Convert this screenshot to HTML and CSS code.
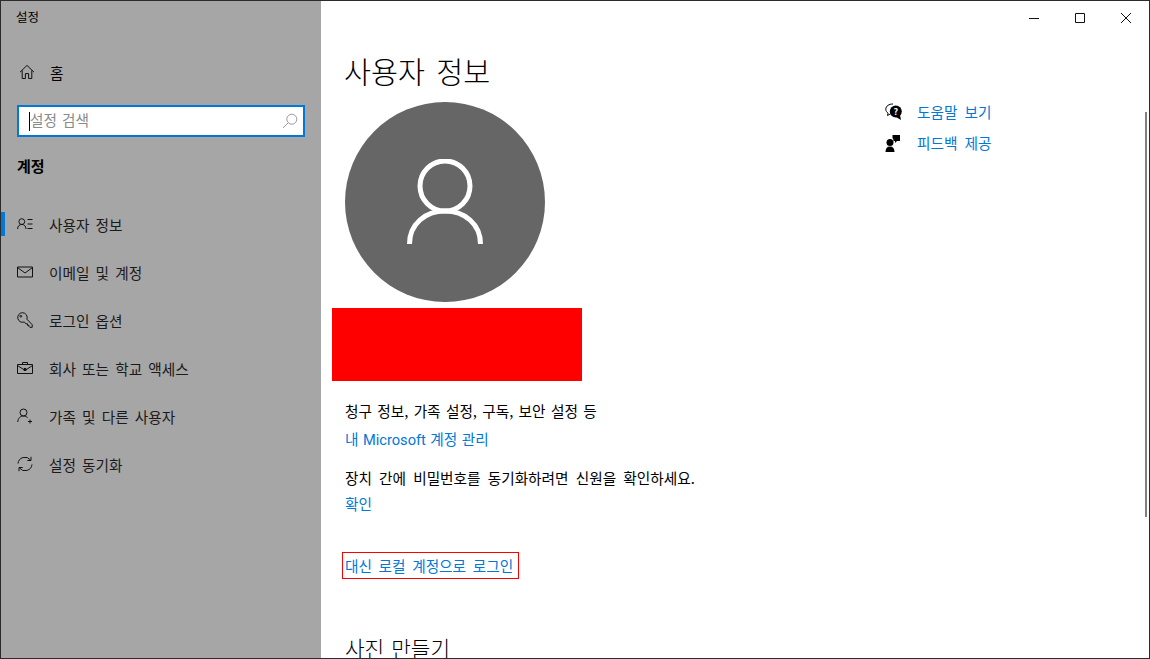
FILE: index.html
```html
<!DOCTYPE html>
<html lang="ko">

<head>
    <meta charset="UTF-8">
    <meta name="viewport" content="width=device-width, initial-scale=1.0">
    <title>설정</title>
    <link rel="stylesheet" href="styles.css">
</head>

<body>
    <div class="window">
        <!-- 왼쪽 메뉴 -->
        <div class="sidebar">
            <div class="app-title">설정</div>
            <div class="home-row">
                <svg class="nav-icon" viewBox="0 0 16 16"><path d="M1 8.200 8 1.400l7 6.800M3.200 6.400v8.100h3.200V9.600h3.200v4.900h3.200V6.400"/></svg>
                <span>홈</span>
            </div>
            <div class="search-box">
                <span class="caret"></span>
                <span class="search-text">설정 검색</span>
                <svg class="search-icon" viewBox="0 0 16 16"><circle cx="9.800" cy="6.200" r="5"/><path d="M6.200 9.800 1 15"/></svg>
            </div>
            <h3 class="group-title">계정</h3>
            <ul class="nav-list">
                <li class="nav-item active">
                    <svg class="nav-icon" viewBox="0 0 16 16"><circle cx="4.800" cy="5.600" r="2.900"/><path d="M.6 13c0-2.800 1.900-4.600 4.200-4.600S9 10.200 9 13M10.500 3.500h5M10.500 8h5M10.500 12.500h5"/></svg>
                    <span>사용자 정보</span>
                </li>
                <li class="nav-item">
                    <svg class="nav-icon" viewBox="0 0 16 16"><path d="M.5 3h15v10H.5zM.5 3.500 8 9l7.500-5.500"/></svg>
                    <span>이메일 및 계정</span>
                </li>
                <li class="nav-item">
                    <svg class="nav-icon" viewBox="0 0 16 16"><path d="M5.500.7a4.800 4.800 0 1 0 1.700 9.300l1.800 1.800h1.500v1.500h1.500v1.200l.8.800h2.400v-2.600L9.900 7.200A4.800 4.800 0 0 0 5.500.7z"/><circle cx="3.800" cy="4.300" r=".9"/></svg>
                    <span>로그인 옵션</span>
                </li>
                <li class="nav-item">
                    <svg class="nav-icon" viewBox="0 0 16 16"><path d="M.5 4.500h15v9H.5zM5.500 4.500V2.500h5v2M.5 5.500 6.500 9.500h3l6-4M7 8.500h2v2H7z"/></svg>
                    <span>회사 또는 학교 액세스</span>
                </li>
                <li class="nav-item">
                    <svg class="nav-icon" viewBox="0 0 16 16"><circle cx="6.500" cy="4.500" r="3.500"/><path d="M.8 14c0-3.500 2.400-6 5.700-6 1.700 0 3.200.7 4.200 1.800M13 11.500v4M11 13.500h4"/></svg>
                    <span>가족 및 다른 사용자</span>
                </li>
                <li class="nav-item">
                    <svg class="nav-icon" viewBox="0 0 16 16"><path d="M1 7.500A7 7 0 0 1 13.500 4M15 8.500A7 7 0 0 1 2.500 12M14 .8v3.700h-3.700M2 15.200v-3.700h3.700"/></svg>
                    <span>설정 동기화</span>
                </li>
            </ul>
        </div>

        <!-- 본문 -->
        <div class="main">
            <div class="title-bar">
                <svg class="win-btn" viewBox="0 0 46 32"><path d="M18 17.500h10"/></svg>
                <svg class="win-btn" viewBox="0 0 46 32"><path d="M18.500 12.500h9v9h-9z"/></svg>
                <svg class="win-btn" viewBox="0 0 46 32"><path d="M18 12l10 10M28 12 18 22"/></svg>
            </div>
            <div class="scrollbar"></div>
            <div class="content">
                <div class="profile">
                    <h1 class="page-title">사용자 정보</h1>
                    <div class="avatar">
                        <svg class="avatar-icon" viewBox="0 0 76 86"><circle cx="38" cy="27" r="25"/><path d="M2.500 85c0-20 16-33 35.500-33s35.500 13 35.500 33"/></svg>
                    </div>
                    <div class="name-block"></div>
                    <p class="desc first">청구 정보, 가족 설정, 구독, 보안 설정 등</p>
                    <a class="link ms-link">내 <span class="latin">Microsoft</span> 계정 관리</a>
                    <p class="desc second">장치 간에 비밀번호를 동기화하려면 신원을 확인하세요.</p>
                    <a class="link confirm-link">확인</a>
                    <div class="local-box"><a class="link">대신 로컬 계정으로 로그인</a></div>
                    <h2 class="section-title">사진 만들기</h2>
                </div>
                <div class="help">
                    <div class="help-row">
                        <svg class="help-icon" viewBox="0 0 18 18"><path class="outline" d="M8 1C4 1 .8 3 .8 6.200c0 1.800 1 3.100 2.300 3.900L2.500 12.500 5.600 10.800"/><circle cx="10.800" cy="8.500" r="6"/><path d="M11 14l5 3-1-5z"/><text x="10.800" y="11.700" class="help-q">?</text></svg>
                        <a class="link">도움말 보기</a>
                    </div>
                    <div class="help-row">
                        <svg class="help-icon" viewBox="0 0 18 18"><circle cx="5" cy="8.500" r="3.500"/><path d="M.5 18c0-3.500 1.500-5.500 4.500-5.500s4.500 2 4.500 5.500zM7.500 1h7.500v6h-3l-2 2V7H8.500c0-1.500-.3-2-1-3z"/></svg>
                        <a class="link">피드백 제공</a>
                    </div>
                </div>
            </div>
        </div>
    </div>
</body>

</html>
```

FILE: styles.css
```css
/* 기본 설정 스타일 */
html, body {
    height: 100%;
}

body {
    margin: 0;
    font-family: "Noto Sans CJK KR", "Noto Sans", sans-serif;
    font-size: 14.667px;
    color: #000;
    background-color: #fff;
    overflow: hidden;
}

.window {
    display: flex;
    box-sizing: border-box;
    height: 659px;
    border: 1px solid #2b2b2b;
}

/* 왼쪽 메뉴 */
.sidebar {
    width: 320px;
    flex-shrink: 0;
    background-color: #a6a6a6;
}

.app-title {
    height: 32px;
    padding-left: 15px;
    font-size: 12.500px;
    line-height: 32px;
}

.home-row {
    display: flex;
    align-items: center;
    height: 48px;
    margin-top: 15px;
    padding-left: 18px;
}

.home-row span {
    margin-left: 15px;
}

.nav-icon {
    width: 16px;
    height: 16px;
    flex-shrink: 0;
    fill: none;
    stroke: #111;
    stroke-width: 1;
}

.search-box {
    display: flex;
    align-items: center;
    box-sizing: border-box;
    width: 288px;
    height: 32px;
    margin: 9px 0 0 16px;
    padding-left: 10px;
    background-color: #fff;
    border: 2px solid #0078d7;
}

.caret {
    width: 1px;
    height: 19px;
    background-color: #000;
}

.search-text {
    flex: 1;
    margin-top: -4px;
    color: #8a8a8a;
    word-spacing: 1px;
}

.search-icon {
    width: 16px;
    height: 16px;
    margin-right: 5px;
    fill: none;
    stroke: #9a9a9a;
    stroke-width: 1;
}

.group-title {
    margin: 14px 0 0 16px;
    font-size: 15px;
    font-weight: 700;
    line-height: 30px;
}

.nav-list {
    margin: 19px 0 0;
    padding: 0;
    list-style: none;
}

.nav-item {
    display: flex;
    align-items: center;
    position: relative;
    height: 48px;
    padding-left: 16px;
    color: #1a1a1a;
    word-spacing: 2px;
}

.nav-item span {
    margin-left: 16px;
}

.nav-item.active::before {
    content: "";
    position: absolute;
    left: 0;
    top: 12px;
    width: 4px;
    height: 24px;
    background-color: #0078d7;
}

/* 본문 */
.main {
    flex: 1;
    position: relative;
    min-width: 0;
    overflow: hidden;
}

.title-bar {
    display: flex;
    justify-content: flex-end;
    height: 32px;
}

.win-btn {
    width: 46px;
    height: 32px;
    fill: none;
    stroke: #111;
    stroke-width: 1;
}

.scrollbar {
    position: absolute;
    right: 2px;
    top: 111px;
    width: 2px;
    height: 405px;
    background-color: #808080;
}

.content {
    display: flex;
}

.profile {
    width: 520px;
    padding-left: 24px;
    flex-shrink: 0;
}

.page-title {
    margin: 12px 0 0 -1px;
    font-size: 29.333px;
    font-weight: 300;
    line-height: 50px;
    word-spacing: 3px;
}

.avatar {
    display: flex;
    align-items: center;
    justify-content: center;
    width: 200px;
    height: 200px;
    margin-top: 7px;
    border-radius: 50%;
    background-color: #666;
}

.avatar-icon {
    width: 76px;
    height: 86px;
    fill: none;
    stroke: #fff;
    stroke-width: 5;
}

.name-block {
    width: 250px;
    height: 73px;
    margin: 6px 0 0 -13px;
    background-color: #f00;
}

.desc {
    margin: 0;
    line-height: 22px;
    word-spacing: 3px;
}

.desc.first {
    margin-top: 19px;
    word-spacing: 1.200px;
}

.desc.second {
    margin-top: 16px;
}

.link {
    display: block;
    margin-top: 6px;
    color: #0078d7;
    line-height: 22px;
    word-spacing: 2.500px;
}

.ms-link {
    word-spacing: .3px;
}

.latin {
    font-family: Roboto, sans-serif;
}

.confirm-link {
    margin-top: 4px;
}

.local-box {
    box-sizing: border-box;
    width: 177px;
    height: 27px;
    margin: 37px 0 0 -3px;
    padding-left: 2px;
    border: 1px solid #f00;
    white-space: nowrap;
}

.local-box .link {
    margin-top: 2px;
}

.section-title {
    margin: 53px 0 0;
    font-size: 21.333px;
    font-weight: 300;
    line-height: 32px;
    word-spacing: 1px;
}

.help {
    margin-left: 20px;
    padding-top: 63px;
}

.help-row {
    display: flex;
    align-items: center;
    height: 31px;
}

.help-row .link {
    margin: 0 0 0 14px;
    word-spacing: 3px;
}

.help-icon {
    width: 18px;
    height: 18px;
    flex-shrink: 0;
}

.help-icon .outline {
    fill: none;
    stroke: #000;
    stroke-width: 1;
}

.help-q {
    fill: #fff;
    font-size: 9px;
    font-weight: 700;
    text-anchor: middle;
}
```
